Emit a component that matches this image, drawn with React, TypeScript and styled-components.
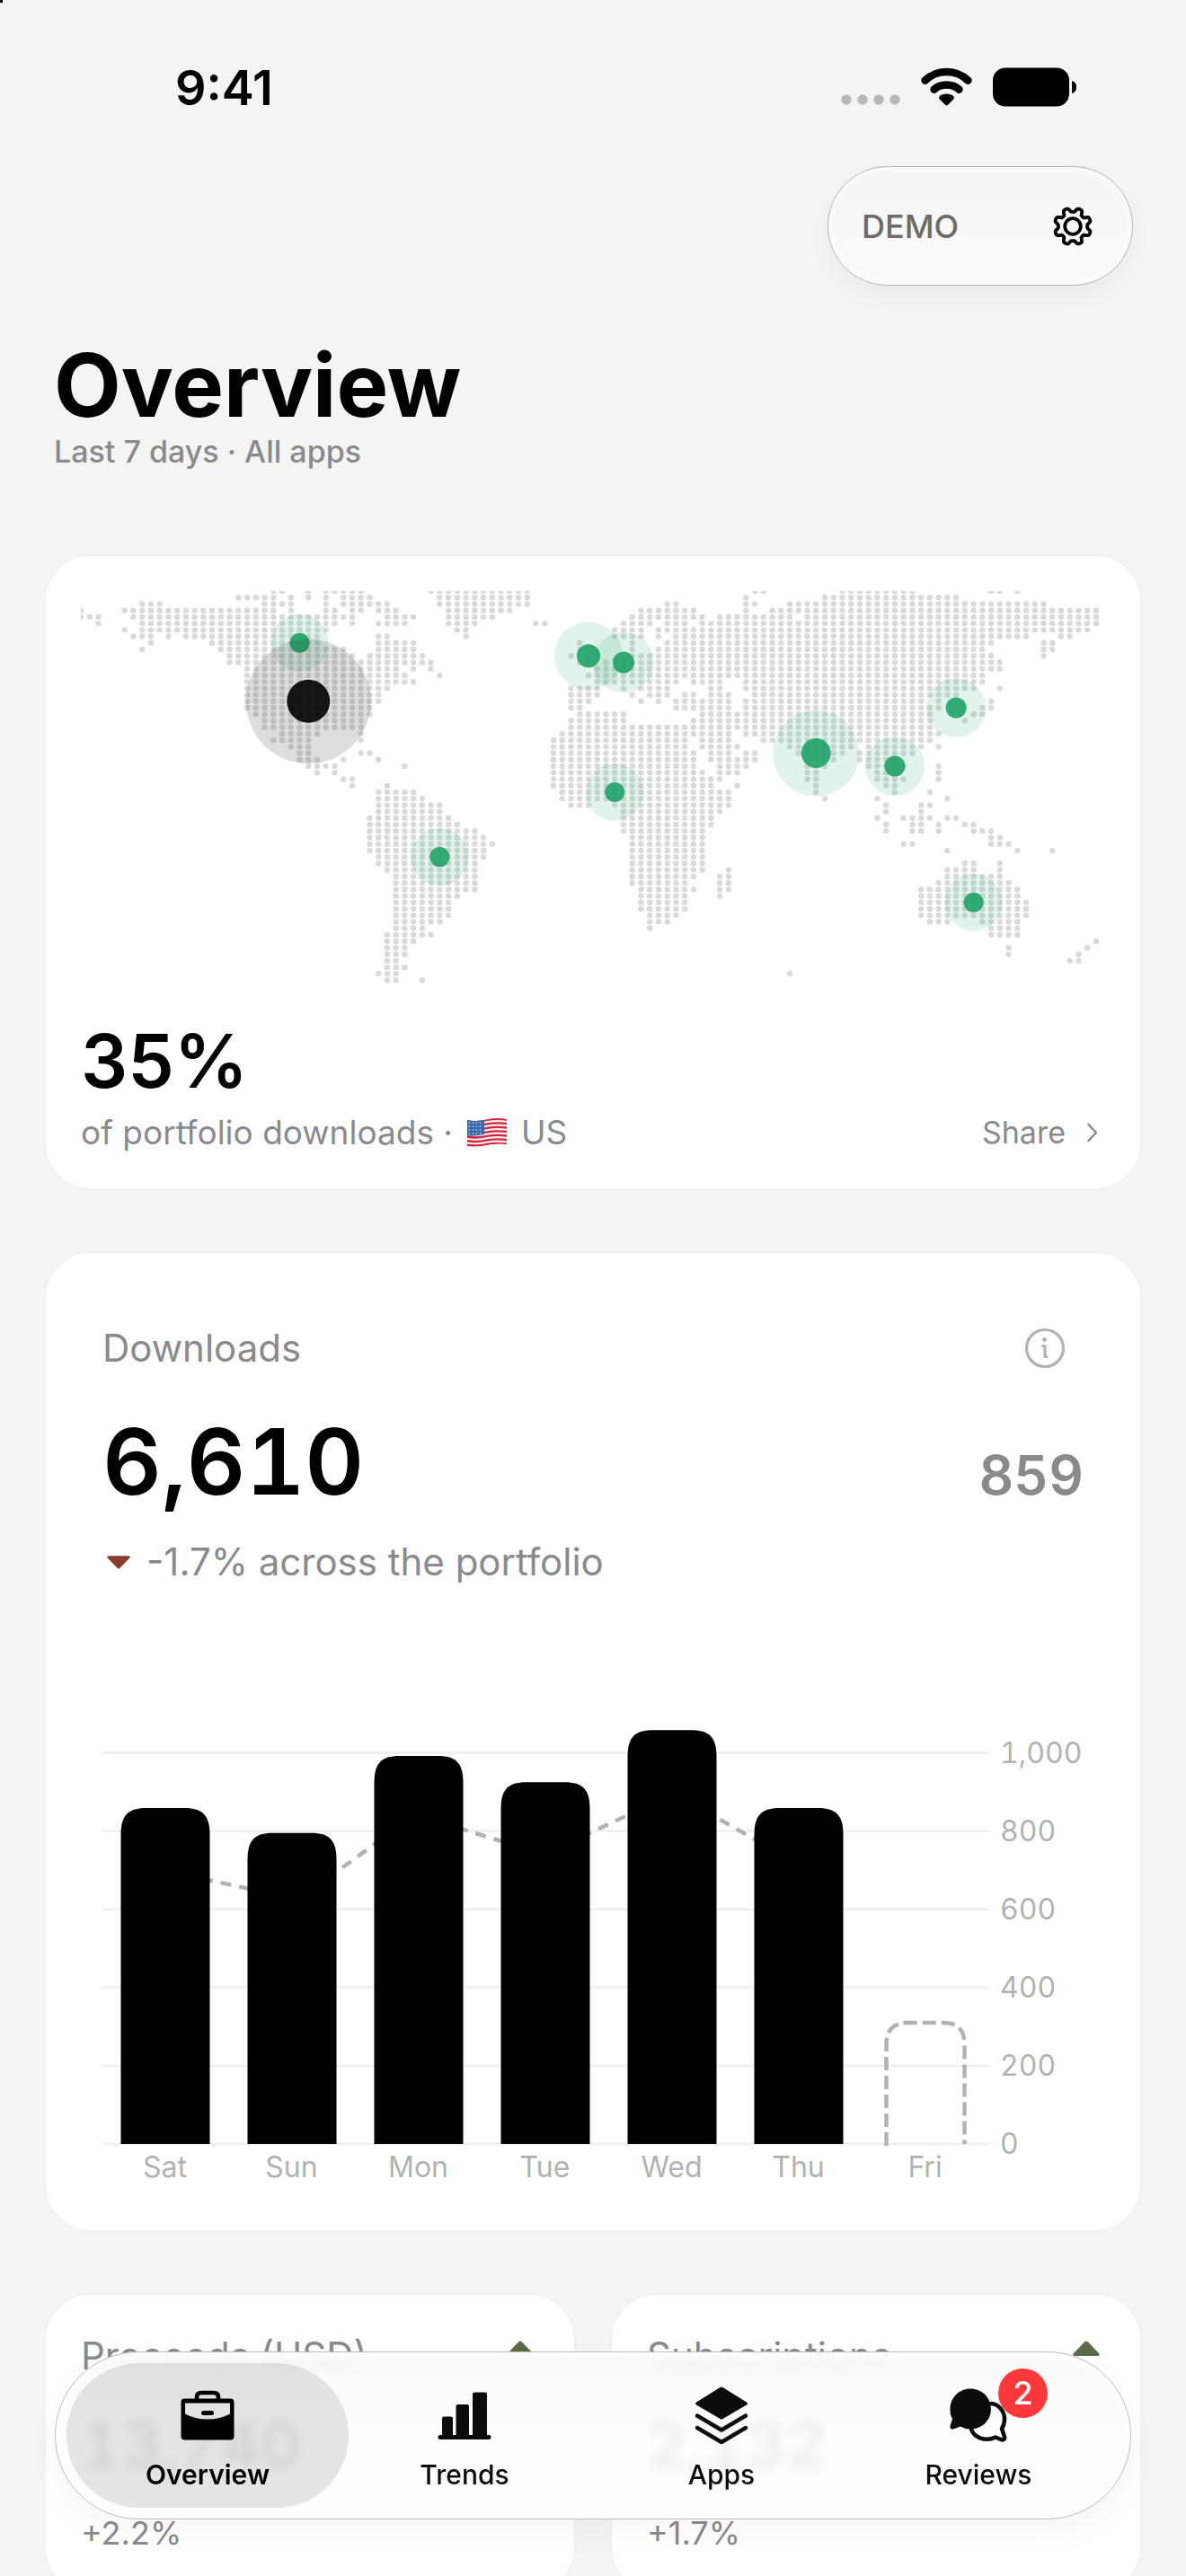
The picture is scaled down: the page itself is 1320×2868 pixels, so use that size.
import React from "react";
import styled, { createGlobalStyle, css } from "styled-components";

const GlobalStyle = createGlobalStyle`
  *, *::before, *::after { box-sizing: border-box; }
  body {
    margin: 0;
    background: #f4f4f2;
    color: #000;
    font-family: Inter, "Noto Sans", sans-serif;
  }
  button {
    padding: 0;
    border: 0;
    background: none;
    color: inherit;
    font: inherit;
    cursor: pointer;
  }
  h1, h2, p { margin: 0; }
  svg { display: block; }
`;

const muted = "#8a8a8e";
const faint = "#b2b2b2";

/* ---------- Shell ---------- */

const Screen = styled.div`
  height: 100vh;
  overflow-y: auto;
  scrollbar-width: none;
  background: linear-gradient(#000, #000) 0 0 / 3px 3px no-repeat, #f4f4f2;
`;

const StatusBar = styled.div`
  display: flex;
  align-items: flex-start;
  justify-content: space-between;
  height: 185px;
  padding: 68px 121px 0 195px;
`;

const Clock = styled.time`
  font-size: 54px;
  line-height: 60px;
  font-weight: 600;
`;

const StatusIcons = styled.div`
  display: flex;
  align-items: center;
  gap: 23px;
  padding-top: 7px;
`;

const Toolbar = styled.div`
  display: flex;
  justify-content: flex-end;
  padding: 0 59px;
`;

const GlassPill = styled.div`
  display: flex;
  align-items: center;
  justify-content: space-between;
  width: 340px;
  height: 133px;
  padding: 0 43px 0 37px;
  border: 1px solid #b4b4b2;
  border-radius: 67px;
  background: linear-gradient(#f5f5f3 25%, #f9f9f7 65%);
  box-shadow: inset 0 0 8px 2px #fff, 0 12px 28px rgba(0, 0, 0, 0.035);
`;

const ModeLabel = styled.span`
  font-size: 36px;
  line-height: 44px;
  font-weight: 500;
  color: #6b6b69;
`;

const Header = styled.header`
  padding: 57px 60px 96px;
`;

const Title = styled.h1`
  font-size: 97px;
  line-height: 108px;
  font-weight: 700;
`;

const Subtitle = styled.p`
  font-size: 34px;
  line-height: 40px;
  font-weight: 500;
  color: ${muted};
`;

const Feed = styled.main`
  display: flex;
  flex-direction: column;
  gap: 72px;
  padding: 0 51px;
`;

const Card = styled.section<{ $pad: string }>`
  flex: 1;
  min-width: 0;
  padding: ${(p) => p.$pad};
  border-radius: 50px;
  background: #fff;
  box-shadow: 0 0 0 2px #f1f1f0;
`;

const Row = styled.div<{ $align?: string }>`
  display: flex;
  align-items: ${(p) => p.$align ?? "center"};
  justify-content: space-between;
`;

const CardRow = styled.div`
  display: flex;
  gap: 42px;
`;

/* ---------- Map card ---------- */

const MapSvg = styled.svg`
  width: 100%;
  height: auto;
  margin-bottom: 36px;
`;

const Share = styled.p`
  margin-bottom: 8px;
  font-size: 82px;
  line-height: 96px;
  font-weight: 600;
`;

const Caption = styled.p`
  display: flex;
  align-items: center;
  gap: 16px;
  font-size: 37px;
  line-height: 46px;
  color: ${muted};
`;

const ShareButton = styled.button`
  display: flex;
  align-items: center;
  gap: 24px;
  padding-right: 8px;
  font-size: 34px;
  line-height: 46px;
  color: ${muted};
`;

/* ---------- Downloads card ---------- */

const CardTitle = styled.h2`
  font-size: 42px;
  line-height: 52px;
  font-weight: 400;
  color: ${muted};
`;

const InfoButton = styled.button`
  padding-right: 20px;
`;

const Total = styled.p`
  margin: 38px 0 24px;
  font-size: 102px;
  line-height: 124px;
  font-weight: 600;
  font-variant-numeric: tabular-nums;
`;

const Latest = styled.p`
  font-size: 60px;
  line-height: 72px;
  font-weight: 600;
  font-variant-numeric: tabular-nums;
  color: ${muted};
`;

const Change = styled.p`
  display: flex;
  align-items: center;
  gap: 18px;
  margin-bottom: 150px;
  padding-left: 5px;
  font-size: 42px;
  line-height: 52px;
  color: ${muted};
`;

const ChartSvg = styled.svg`
  width: 100%;
  height: auto;
  overflow: visible;
  font-size: 32px;
  font-variant-numeric: tabular-nums;
`;

/* ---------- Metric cards ---------- */

const MetricTitle = styled(CardTitle)`
  line-height: 48px;
`;

const TrendSlot = styled.span`
  padding: 7px 6px 0 0;
`;

const MetricValue = styled.p`
  margin: 32px 0 33px;
  font-size: 70px;
  line-height: 86px;
  font-weight: 600;
  font-variant-numeric: tabular-nums;
`;

const MetricDelta = styled.p`
  font-size: 36px;
  line-height: 44px;
  color: ${muted};
`;

/* ---------- Tab bar ---------- */

const TabBar = styled.nav`
  position: fixed;
  right: 61px;
  bottom: 63px;
  left: 61px;
  display: flex;
  height: 187px;
  padding: 12px 26px;
  border: 1px solid #bcbcbc;
  border-radius: 94px;
  background: linear-gradient(rgba(249, 249, 249, 0.93), rgba(253, 253, 253, 0.93) 50%);
  backdrop-filter: blur(6px);
  box-shadow: inset 0 0 10px 3px #fff, 0 14px 36px rgba(0, 0, 0, 0.04);
`;

const Tab = styled.a<{ $active?: boolean }>`
  position: relative;
  z-index: 0;
  display: flex;
  flex: 1;
  flex-direction: column;
  align-items: center;
  gap: 14px;
  padding-top: 24px;
  color: #0c0c0c;
  font-size: 30px;
  line-height: 36px;
  font-weight: 500;
  text-decoration: none;
  ${(p) =>
    p.$active &&
    css`
      color: #000;
      font-weight: 600;
      &::before {
        content: "";
        position: absolute;
        z-index: -1;
        inset: 0 -14px;
        border-radius: 81px;
        background: rgba(0, 0, 0, 0.1);
      }
    `}
`;

const IconBox = styled.span`
  position: relative;
  display: grid;
  place-items: center;
  width: 64px;
  height: 68px;
`;

const Badge = styled.span`
  position: absolute;
  top: -18px;
  left: 54px;
  width: 55px;
  height: 55px;
  border-radius: 50%;
  background: #ff383c;
  color: #fff;
  font-size: 36px;
  line-height: 55px;
  font-weight: 500;
  text-align: center;
`;

/* ---------- World map data ---------- */

const COL = 9.741;
const ROW = 7.222;

// Land cells of each latitude row, as column ranges.
const LAND = [
  "22-23 26 28-32 40-51 77-78 87-95 104-105 107",
  "18-22 24 26 28 30-33 41-51 76 85-100",
  "7-9 21-24 28 30-35 41-51 67-68 76-77 81-110",
  "0 5-22 24 28-29 31-32 34-36 42-49 64-70 76 79-116",
  "0-2 6-31 35-38 42-47 63-71 73-81 83-116",
  "2 7-29 31 34-37 42-45 52-53 62-65 67-69 71-116",
  "5 7-28 43-44 61-64 66-115",
  "6-8 10 12-27 34-35 44 61-64 66 68-108 112-113",
  "8 15-27 34-38 57 63 67-104 110-111",
  "7 16-30 34-38 57 63 66-103 110-111",
  "17-31 33-39 56 58 63-104 110",
  "17-37 38-40 57-58 60 62-105",
  "19-36 38 40 59-103 104-105",
  "19-37 41 58-75 76-103",
  "19-38 59-68 70-73 76-103",
  "19-35 56-59 62 64-67 72-73 76-102 105",
  "19-34 56-59 63 65-67 69-70 72-74 77-100",
  "19-34 56-58 64 66 68-74 76-96 98 104",
  "19-33 56-57 68-74 76-98 103-104",
  "20-33 57-62 71-97 102-103",
  "21-32 56-62 70-97 101",
  "21-32 56-97",
  "23-27 32 55-74 76-98",
  "22-26 32 54-69 71-74 78-97",
  "24-26 54-69 71-75 81-88 90-96 98",
  "25-26 32-33 54-70 72-74 76-77 82-87 89-95",
  "25-27 30 34 54-70 72-77 83-86 89-93",
  "26-29 37 54-70 73-76 83-85 90-94 98",
  "27 29 54-71 73-75 83-84 91-93 98",
  "30-31 54-72 73 83-84 91-94 98",
  "31 35 54-72 75 84 92-93",
  "34-38 55-72 73-74 84 93 97",
  "34-39 55-72 73-74 85 91 99",
  "34-41 56-58 61-74 92 96-97",
  "34-41 62-73 92 96",
  "33-42 62-72 91 94-97 99-100",
  "33-43 62-72 92 95-96 98 101-102",
  "33-45 62-71 92 95-96 98 102-104",
  "33-46 63-71 104-105",
  "33-47 63-71 94-95 104-106",
  "33-46 63-71 99 107 111",
  "34-46 63-71",
  "34-45 63-71 101-102 105",
  "35-45 63-71 74 99-102 105",
  "36-45 63-70 73-74 99-105",
  "36-45 63-69 73-74 98-106",
  "36-45 64-70 73-74 96-107",
  "36-43 64-69 73 96-107",
  "36-42 64-69 96-108",
  "36-42 64-69 96-108",
  "36-42 65-68 96-108",
  "36-41 65-67 97-99 103-107",
  "36-39 65 104-107",
  "35-40 104-107",
  "35-38 116",
  "35-37 106 115",
  "35-37 106 114",
  "35-36 113-114",
  "35-37",
  "34-36 81",
  "35-36 39",
];

const cells = LAND.flatMap((row, r) =>
  row.split(" ").flatMap((range) => {
    const [from, to = from] = range.split("-").map(Number);
    return Array.from({ length: to - from + 1 }, (_, i) => ({ c: from + i, r }));
  })
);

const GREEN = "#1fa267";
const MARKERS = [
  { id: "ca", c: 25, r: 8, dot: 11, halo: 32 },
  { id: "gb", c: 58, r: 10, dot: 13, halo: 38 },
  { id: "de", c: 62, r: 11, dot: 12, halo: 34 },
  { id: "ng", c: 61, r: 31, dot: 11, halo: 32 },
  { id: "br", c: 41, r: 41, dot: 11, halo: 32 },
  { id: "in", c: 84, r: 25, dot: 16.5, halo: 48 },
  { id: "th", c: 93, r: 27, dot: 11.5, halo: 33 },
  { id: "kr", c: 100, r: 18, dot: 11.5, halo: 33 },
  { id: "au", c: 102, r: 48, dot: 11, halo: 32 },
  { id: "us", c: 26, r: 17, dot: 24, halo: 69.5, color: "#000" },
];

function WorldMap() {
  return (
    <MapSvg viewBox="0 0 1140 440" role="img" aria-label="Downloads by country">
      {cells.map(({ c, r }) => (
        <circle key={`${c}-${r}`} cx={c * COL} cy={r * ROW} r={3.2} fill="#dadada" />
      ))}
      {MARKERS.map(({ id, c, r, dot, halo, color = GREEN }) => (
        <g key={id} fill={color}>
          <circle cx={c * COL} cy={r * ROW} r={halo} opacity={0.135} />
          <circle cx={c * COL} cy={r * ROW} r={dot} opacity={0.9} />
        </g>
      ))}
    </MapSvg>
  );
}

/* ---------- Downloads chart ---------- */

const BASE = 472;
const UNIT = 0.4355;
const DAYS = [
  { day: "Sat", value: 859 },
  { day: "Sun", value: 795 },
  { day: "Mon", value: 992 },
  { day: "Tue", value: 925 },
  { day: "Wed", value: 1058 },
  { day: "Thu", value: 859 },
  { day: "Fri", value: 310, partial: true },
];
const TICKS = [0, 200, 400, 600, 800, 1000];

function DownloadsChart() {
  return (
    <ChartSvg viewBox="0 0 1092 524" role="img" aria-label="Downloads per day">
      {TICKS.map((t) => (
        <g key={t}>
          <path d={`M0 ${BASE - t * UNIT}H987`} stroke="#f1f1f1" strokeWidth={3} />
          <text x={999} y={BASE - t * UNIT + 11} fill={faint}>
            {t.toLocaleString("en-US")}
          </text>
        </g>
      ))}
      <path
        d="M70 168L211 198L236 187L262 168L299 141L326 121L352 108L386 117L438 133L494 150L516 138L546 124L578 109L620 90L656 93L686 110L728 134L775 161"
        fill="none"
        stroke={faint}
        strokeWidth={4.5}
        strokeDasharray="12 9"
      />
      {DAYS.map(({ day, value, partial }, i) => {
        const x = 20.5 + i * 141;
        const top = BASE - value * UNIT;
        return (
          <g key={day}>
            {partial ? (
              <path
                d={`M${x + 6} ${BASE + 2}V${top + 24}Q${x + 6} ${top} ${x + 30} ${top}H${x + 69}Q${x + 93} ${top} ${x + 93} ${top + 24}V${BASE}`}
                fill="none"
                stroke={faint}
                strokeWidth={4.5}
                strokeDasharray="15 6"
              />
            ) : (
              <path
                d={`M${x} ${BASE}V${top + 30}C${x} ${top + 8} ${x + 8} ${top} ${x + 28} ${top}H${x + 71}C${x + 91} ${top} ${x + 99} ${top + 8} ${x + 99} ${top + 30}V${BASE}Z`}
              />
            )}
            <text x={x + 49} y={509} textAnchor="middle" fill={faint}>
              {day}
            </text>
          </g>
        );
      })}
    </ChartSvg>
  );
}

/* ---------- Icons ---------- */

const CellularDots = () => (
  <svg width="66" height="44" viewBox="0 0 66 44" fill="#b8b8b6" aria-hidden="true">
    {[6, 24, 42, 60].map((x) => (
      <circle key={x} cx={x} cy="36" r="5.7" />
    ))}
  </svg>
);

const Wifi = () => (
  <svg width="57" height="44" viewBox="0 0 57 44" aria-hidden="true">
    <g fill="none" stroke="#000" strokeWidth="8.6" strokeLinecap="round">
      <path d="M4.6 14.6Q14.5 5 28.5 5T52.4 14.6" />
      <path d="M14.6 24.6Q20 19.5 28.5 19.5T42.4 24.6" />
    </g>
    <path d="M28.5 29.5C32 29.5 35 30.8 36.4 32.6C37.2 33.7 37 34.8 36 35.8L30 41.8Q28.5 43.2 27 41.8L21 35.8C20 34.8 19.8 33.7 20.6 32.6C22 30.8 25 29.5 28.5 29.5Z" />
  </svg>
);

const Battery = () => (
  <svg width="94" height="44" viewBox="0 0 94 44" aria-hidden="true">
    <rect width="85" height="43" y="0.5" rx="14" />
    <path d="M88 15Q93 16.5 93 22T88 29Z" />
  </svg>
);

const gearOutline = Array.from({ length: 96 }, (_, i) => {
  const a = (i / 96) * Math.PI * 2;
  const wave = Math.cos(8 * a - Math.PI);
  const r = 18.3 + 2.3 * Math.tanh(2 * wave) - (wave < 0 ? 0.9 * Math.sin(2 * a) ** 2 : 0);
  return `${(23 + r * Math.cos(a)).toFixed(2)} ${(23 + r * Math.sin(a)).toFixed(2)}`;
}).join("L");

const Gear = () => (
  <svg width="46" height="46" viewBox="0 0 46 46" fill="none" stroke="#000" strokeWidth="3.8" strokeLinejoin="round" aria-hidden="true">
    <path d={`M${gearOutline}Z`} />
    <circle cx="23" cy="23" r="8.8" />
  </svg>
);

const Flag = () => (
  <svg width="44" height="32" viewBox="0 0 44 32" role="img" aria-label="United States">
    <defs>
      <clipPath id="flag-wave">
        <path d="M0 2Q10 4 21 1.5T44 1V29Q33 27.5 22 30T0 31Z" />
      </clipPath>
    </defs>
    <g clipPath="url(#flag-wave)">
      <rect width="44" height="32" fill="#f7f2f2" />
      {Array.from({ length: 7 }, (_, i) => (
        <path
          key={i}
          d={`M-1 ${2.6 + i * 4.5}Q10 ${4.6 + i * 4.5} 21 ${2.2 + i * 4.5}T45 ${1.6 + i * 4.5}`}
          fill="none"
          stroke="#d8243c"
          strokeWidth="2.3"
        />
      ))}
      <path d="M0 0H19V18Q9 20.5 0 19.5Z" fill="#3b6aac" />
      {[5, 9, 13, 17].map((y) =>
        [2.5, 6.5, 10.5, 14.5].map((x) => <circle key={`${x}-${y}`} cx={x} cy={y} r="0.8" fill="#dfe8f5" />)
      )}
    </g>
  </svg>
);

const Chevron = () => (
  <svg width="12" height="22" viewBox="0 0 12 22" fill="none" stroke={muted} strokeWidth="2.5" strokeLinecap="round" strokeLinejoin="round" aria-hidden="true">
    <path d="M1.5 2L10 11L1.5 20" />
  </svg>
);

const Info = () => (
  <svg width="46" height="46" viewBox="0 0 46 46" fill="none" stroke={faint} strokeWidth="3.2" strokeLinecap="round" strokeLinejoin="round" aria-hidden="true">
    <circle cx="23" cy="23" r="20.5" />
    <path d="M20.5 20.5H23V32.5H25" />
    <circle cx="22.5" cy="13.5" r="2.4" fill={faint} stroke="none" />
  </svg>
);

const Trend = ({ down }: { down?: boolean }) => (
  <svg width={down ? 26 : 30} height={down ? 15 : 17} viewBox="0 0 30 17" fill={down ? "#8b3d2b" : "#5a6b45"} aria-hidden="true">
    <path d={down ? "M2 0H28Q31 1 29 3L17 15.5Q15 17.5 13 15.5L1 3Q-1 1 2 0Z" : "M2 17H28Q31 16 29 14L17 1.5Q15 -0.5 13 1.5L1 14Q-1 16 2 17Z"} />
  </svg>
);

const Briefcase = () => (
  <svg width="60" height="56" viewBox="0 0 60 56" aria-hidden="true">
    <path d="M18 12V8Q18 3 23 3H37Q42 3 42 8V12" fill="none" stroke="currentColor" strokeWidth="4.6" />
    <path
      fillRule="evenodd"
      fill="currentColor"
      d="M4.5 9.5H55.5Q59.5 9.5 59.5 13.5V51.5Q59.5 55.5 55.5 55.5H4.5Q0.5 55.5 0.5 51.5V13.5Q0.5 9.5 4.5 9.5ZM5 14.5V26.5Q16 32.5 30 32.5T55 26.5V14.5Z"
    />
    <rect x="23" y="23" width="14" height="5" rx="2.5" fill="currentColor" />
  </svg>
);

const Bars = () => (
  <svg width="60" height="53" viewBox="0 0 60 53" fill="currentColor" aria-hidden="true">
    <rect x="5" y="27.5" width="12" height="24" rx="2" />
    <rect x="20.5" y="14" width="14.5" height="37" rx="2" />
    <rect x="39" y="0.5" width="16" height="50" rx="2" />
    <rect x="0.5" y="48" width="59" height="5" rx="2.5" />
  </svg>
);

const Layers = () => (
  <svg width="60" height="64" viewBox="0 0 60 64" aria-hidden="true">
    <path d="M28.5 1Q30 0 31.5 1L58 17.5Q60 19 58 20.5L31.5 36Q30 37 28.5 36L2 20.5Q0 19 2 17.5Z" fill="currentColor" />
    <path d="M3 32.5L30 48.5L57 32.5M3 46L30 62L57 46" fill="none" stroke="currentColor" strokeWidth="4.4" strokeLinecap="round" strokeLinejoin="round" />
  </svg>
);

const Bubbles = () => (
  <svg width="64" height="60" viewBox="0 0 64 60" aria-hidden="true">
    <path
      d="M46.5 17C55 18 61 26 61 34C61 38 60 42 58 45L61 54C61.6 57 60 58 57 57L51 54.5C40 60 25 55 23.5 43"
      fill="none"
      stroke="currentColor"
      strokeWidth="4.5"
      strokeLinecap="round"
      strokeLinejoin="round"
    />
    <path d="M23 0.5C36 0.5 46 10.5 46 23S36 45.5 23 45.5C19 45.5 15 44.5 12 42.5L4 45.5C1 46.2 0 44 0.5 42L3 34C1 31 0.5 27 0.5 23C0.5 10.5 10.5 0.5 23 0.5Z" fill="currentColor" />
  </svg>
);

/* ---------- Page ---------- */

const METRICS = [
  { title: "Proceeds (USD)", value: "13,740", delta: "+2.2%" },
  { title: "Subscriptions", value: "2,132", delta: "+1.7%" },
];

const TABS = [
  { label: "Overview", icon: <Briefcase />, active: true },
  { label: "Trends", icon: <Bars /> },
  { label: "Apps", icon: <Layers /> },
  { label: "Reviews", icon: <Bubbles />, badge: 2 },
];

export default function App() {
  return (
    <Screen>
      <GlobalStyle />
      <StatusBar>
        <Clock>9:41</Clock>
        <StatusIcons>
          <CellularDots />
          <Wifi />
          <Battery />
        </StatusIcons>
      </StatusBar>

      <Toolbar>
        <GlassPill>
          <ModeLabel>DEMO</ModeLabel>
          <button type="button" aria-label="Settings">
            <Gear />
          </button>
        </GlassPill>
      </Toolbar>

      <Header>
        <Title>Overview</Title>
        <Subtitle>Last 7 days · All apps</Subtitle>
      </Header>

      <Feed>
        <Card $pad="39px">
          <WorldMap />
          <Share>35%</Share>
          <Row>
            <Caption>
              <span>of portfolio downloads ·</span>
              <Flag />
              <span>US</span>
            </Caption>
            <ShareButton type="button">
              Share
              <Chevron />
            </ShareButton>
          </Row>
        </Card>

        <Card $pad="80px 63px 44px">
          <Row>
            <CardTitle>Downloads</CardTitle>
            <InfoButton type="button" aria-label="About downloads">
              <Info />
            </InfoButton>
          </Row>
          <Row $align="baseline">
            <Total>6,610</Total>
            <Latest>859</Latest>
          </Row>
          <Change>
            <Trend down />
            -1.7% across the portfolio
          </Change>
          <DownloadsChart />
        </Card>

        <CardRow>
          {METRICS.map((m) => (
            <Card key={m.title} $pad="44px 39px">
              <Row $align="flex-start">
                <MetricTitle>{m.title}</MetricTitle>
                <TrendSlot>
                  <Trend />
                </TrendSlot>
              </Row>
              <MetricValue>{m.value}</MetricValue>
              <MetricDelta>{m.delta}</MetricDelta>
            </Card>
          ))}
        </CardRow>
      </Feed>

      <TabBar aria-label="Main">
        {TABS.map((t) => (
          <Tab key={t.label} href={`#${t.label.toLowerCase()}`} $active={t.active} aria-current={t.active ? "page" : undefined}>
            <IconBox>
              {t.icon}
              {t.badge && <Badge>{t.badge}</Badge>}
            </IconBox>
            {t.label}
          </Tab>
        ))}
      </TabBar>
    </Screen>
  );
}
